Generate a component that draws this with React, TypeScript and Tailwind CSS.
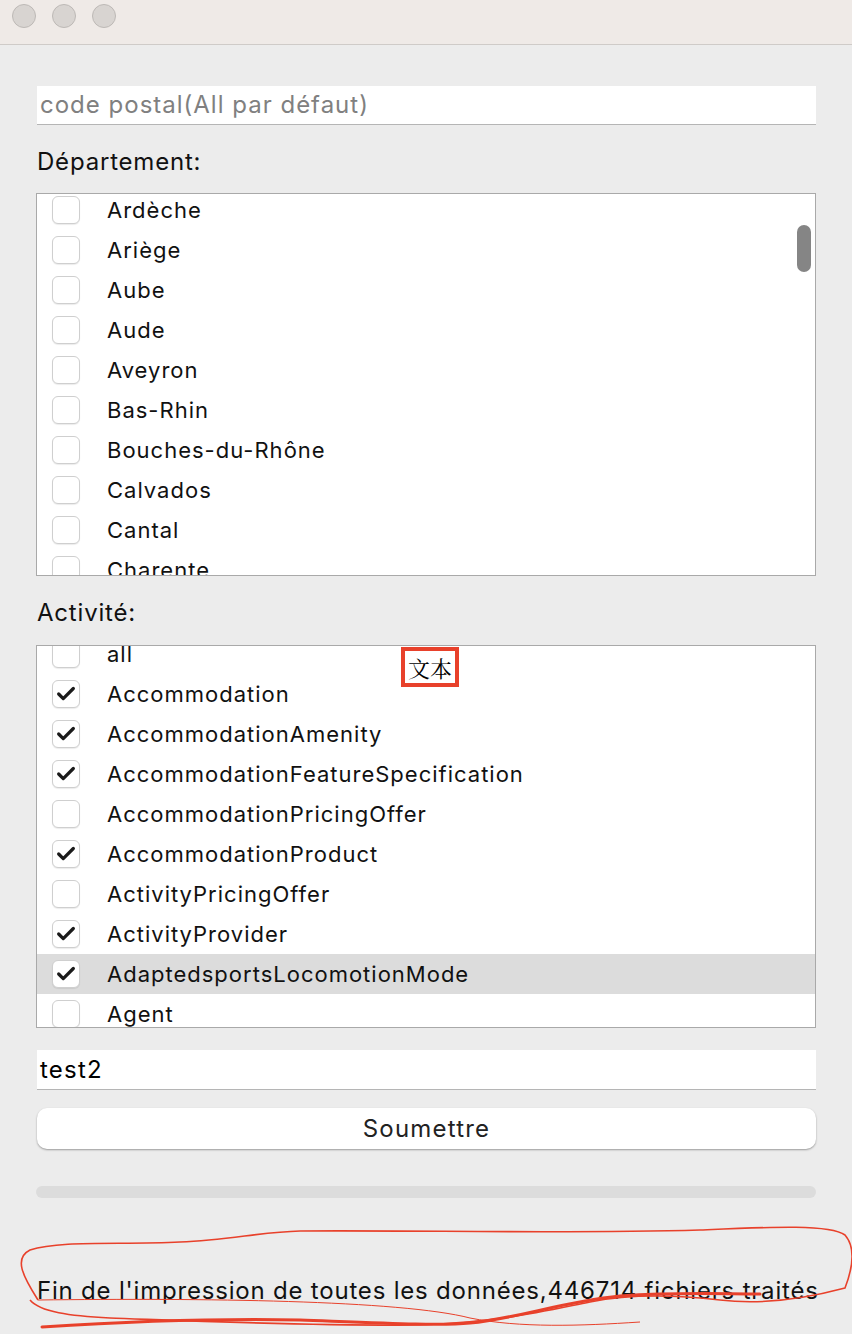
import { Check } from "lucide-react";

type Item = { label: string; checked?: boolean; selected?: boolean };

const departements: Item[] = [
  { label: "Ardèche" },
  { label: "Ariège" },
  { label: "Aube" },
  { label: "Aude" },
  { label: "Aveyron" },
  { label: "Bas-Rhin" },
  { label: "Bouches-du-Rhône" },
  { label: "Calvados" },
  { label: "Cantal" },
  { label: "Charente" },
];

const activites: Item[] = [
  { label: "all" },
  { label: "Accommodation", checked: true },
  { label: "AccommodationAmenity", checked: true },
  { label: "AccommodationFeatureSpecification", checked: true },
  { label: "AccommodationPricingOffer" },
  { label: "AccommodationProduct", checked: true },
  { label: "ActivityPricingOffer" },
  { label: "ActivityProvider", checked: true },
  { label: "AdaptedsportsLocomotionMode", checked: true, selected: true },
  { label: "Agent" },
];

const Row = ({ label, checked, selected }: Item) => (
  <div className={`flex items-center h-[40px] ${selected ? "bg-[#dcdcdc]" : ""}`}>
    <div className="ml-[15px] w-[28px] h-[28px] rounded-[6px] border border-[#cfcfcf] bg-white flex items-center justify-center shadow-[0_1px_1px_rgba(0,0,0,0.08)]">
      {checked && <Check size={22} strokeWidth={3.5} className="text-[#1a1a1a]" />}
    </div>
    <span className="ml-[27px] text-[22px] text-[#111] tracking-[1px]">{label}</span>
  </div>
);

const App = () => (
  <div className="w-[852px] h-[1334px] bg-[#ececec] relative overflow-hidden font-['Inter','Liberation_Sans',sans-serif]">
    {/* title bar */}
    <div className="h-[45px] bg-[#efeae7] border-b border-[#cfcbc8] flex items-start gap-[16px] pl-[12px] pt-[4px]">
      <div className="w-[24px] h-[24px] rounded-full bg-[#d8d4d1] border border-[#bdb9b6]" />
      <div className="w-[24px] h-[24px] rounded-full bg-[#d8d4d1] border border-[#bdb9b6]" />
      <div className="w-[24px] h-[24px] rounded-full bg-[#d8d4d1] border border-[#bdb9b6]" />
    </div>

    <div className="px-[36px] flex flex-col">
      <div className="mt-[41px] ml-[1px] h-[39px] bg-white border-b border-[#b5b5b5] flex items-center pl-[3px] text-[24px] text-[#808080] tracking-[1px]">
        code postal(All par défaut)
      </div>

      <div className="mt-[24px] ml-[1px] h-[26px] text-[24px] text-[#111] leading-[26px] tracking-[0.8px]">Département:</div>

      <div className="mt-[18px] h-[383px] border border-[#a9a9a9] bg-white overflow-hidden relative">
        <div className="-mt-[4px]">
          {departements.map((d) => (
            <Row key={d.label} {...d} />
          ))}
        </div>
        <div className="absolute right-[4px] top-[31px] w-[14px] h-[47px] rounded-full bg-[#858585]" />
      </div>

      <div className="mt-[24px] ml-[1px] h-[26px] text-[24px] text-[#111] leading-[26px] tracking-[0.8px]">Activité:</div>

      <div className="mt-[19px] h-[383px] border border-[#a9a9a9] bg-white overflow-hidden relative">
        <div className="-mt-[12px]">
          {activites.map((a) => (
            <Row key={a.label} {...a} />
          ))}
        </div>
        <div className="absolute left-[364px] top-[1px] h-[40px] px-[3px] bg-white border-[4px] border-[#e8412b] flex items-center text-[22px] text-black font-['Noto_Serif_CJK_SC','Noto_Sans_CJK_SC',serif]">
          文本
        </div>
      </div>

      <div className="mt-[22px] ml-[1px] h-[40px] bg-white border-b border-[#b5b5b5] flex items-center pl-[3px] text-[24px] text-black tracking-[1.2px]">
        test2
      </div>

      <div className="mt-[18px] ml-[1px] h-[41px] bg-white rounded-[10px] shadow-[0_1px_2px_rgba(0,0,0,0.35)] flex items-center justify-center text-[24px] text-[#222] tracking-[1.2px]">
        Soumettre
      </div>

      <div className="mt-[37px] h-[12px] rounded-full bg-[#dcdcdc]" />

      <div className="mt-[79px] ml-[1px] text-[24px] text-[#111] leading-[28px] whitespace-nowrap tracking-[0.8px]">
        Fin de l'impression de toutes les données,446714 fichiers traités
      </div>
    </div>

    {/* red annotation */}
    <svg className="absolute left-0 top-[1210px]" width="852" height="124" viewBox="0 1210 852 124" fill="none">
      <path
        d="M38 1300 C22 1275 14 1258 30 1250 C60 1240 120 1245 180 1242 C230 1240 260 1232 300 1231 C420 1230 560 1234 700 1230 C770 1227 830 1224 845 1235 C858 1250 850 1275 845 1288 C800 1300 760 1305 720 1300 C660 1293 620 1296 590 1302 C540 1312 500 1322 420 1325 C300 1326 170 1320 110 1318 C70 1316 40 1312 30 1300"
        stroke="#e8412b"
        strokeWidth="1.6"
      />
      <path d="M38 1300 C200 1298 400 1300 470 1318 C520 1328 580 1326 640 1322" stroke="#e8412b" strokeWidth="1" />
      <path d="M42 1327 C120 1322 200 1318 300 1320 C380 1323 440 1326 470 1323 C520 1318 560 1302 620 1296 C680 1292 720 1294 760 1294" stroke="#e8412b" strokeWidth="3" strokeLinecap="round" />
    </svg>
  </div>
);

export default App;
